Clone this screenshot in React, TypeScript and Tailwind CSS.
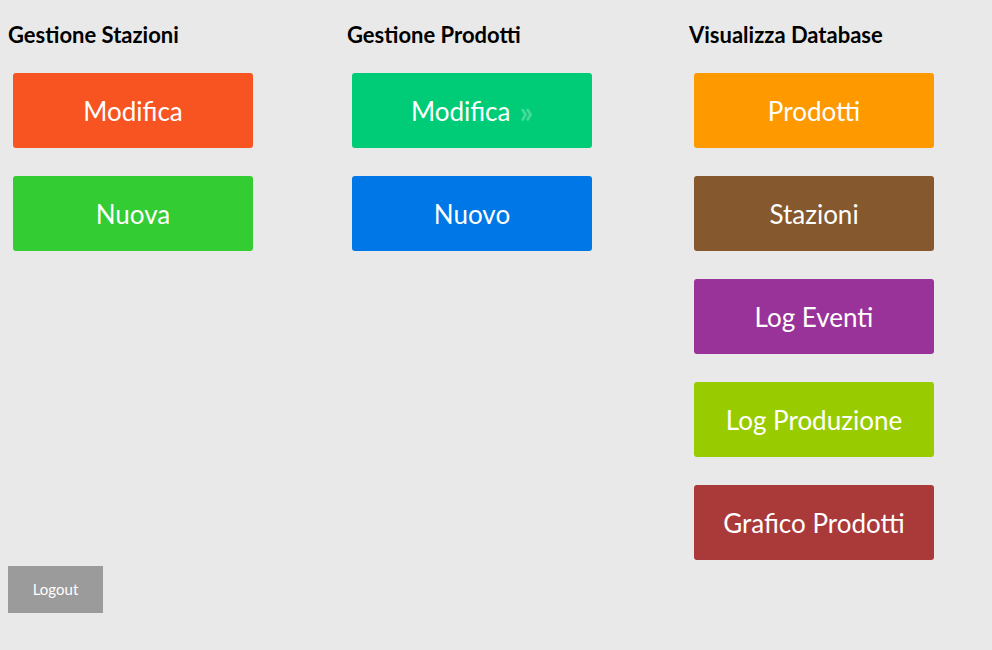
import React from "react";

type Tile = { label: string; color: string; arrow?: boolean };

const columns: { title: string; width: string; tiles: Tile[] }[] = [
  {
    title: "Gestione Stazioni",
    width: "w-[339px]",
    tiles: [
      { label: "Modifica", color: "bg-[#f75421]" },
      { label: "Nuova", color: "bg-[#33cc33]" },
    ],
  },
  {
    title: "Gestione Prodotti",
    width: "w-[342px]",
    tiles: [
      { label: "Modifica", color: "bg-[#00cc77]", arrow: true },
      { label: "Nuovo", color: "bg-[#0077e6]" },
    ],
  },
  {
    title: "Visualizza Database",
    width: "w-[260px]",
    tiles: [
      { label: "Prodotti", color: "bg-[#ff9900]" },
      { label: "Stazioni", color: "bg-[#85592d]" },
      { label: "Log Eventi", color: "bg-[#993399]" },
      { label: "Log Produzione", color: "bg-[#99cc00]" },
      { label: "Grafico Prodotti", color: "bg-[#aa3939]" },
    ],
  },
];

export default function App() {
  return (
    <div className="min-h-[650px] bg-[#e9e9e9] px-2 pt-[22px] font-['Lato',sans-serif]">
      <div className="flex">
        {columns.map((col) => (
          <div key={col.title} className={col.width}>
            <h2 className="h-[26px] whitespace-nowrap text-[22px] font-bold leading-[26px] text-black">{col.title}</h2>
            <div className="mt-[25px] flex flex-col gap-[28px] pl-[5px]">
              {col.tiles.map((t) => (
                <a
                  key={t.label}
                  href="#"
                  className={`flex h-[75px] w-[240px] items-center justify-center rounded-[3px] pt-[1px] text-[26px] text-white ${t.color}`}
                >
                  {t.label}
                  {t.arrow && <span className="ml-[9px] text-[30px] font-bold leading-none text-white/30">»</span>}
                </a>
              ))}
            </div>
          </div>
        ))}
      </div>
      <button className="mt-[6px] flex h-[47px] w-[95px] items-center justify-center bg-[#9b9b9b] text-[15px] text-white">
        Logout
      </button>
    </div>
  );
}
